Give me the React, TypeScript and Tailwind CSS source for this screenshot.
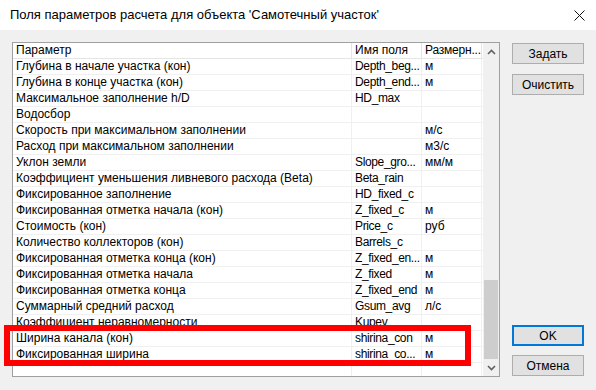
import React from 'react'

type Row = { name: string; field: string; unit: string }

const rows: Row[] = [
  { name: 'Глубина в начале участка (кон)', field: 'Depth_beg...', unit: 'м' },
  { name: 'Глубина в конце участка (кон)', field: 'Depth_end...', unit: 'м' },
  { name: 'Максимальное заполнение h/D', field: 'HD_max', unit: '' },
  { name: 'Водосбор', field: '', unit: '' },
  { name: 'Скорость при максимальном заполнении', field: '', unit: 'м/с' },
  { name: 'Расход при максимальном заполнении', field: '', unit: 'м3/с' },
  { name: 'Уклон земли', field: 'Slope_gro...', unit: 'мм/м' },
  { name: 'Коэффициент уменьшения ливневого расхода (Beta)', field: 'Beta_rain', unit: '' },
  { name: 'Фиксированное заполнение', field: 'HD_fixed_c', unit: '' },
  { name: 'Фиксированная отметка начала (кон)', field: 'Z_fixed_c', unit: 'м' },
  { name: 'Стоимость (кон)', field: 'Price_c', unit: 'руб' },
  { name: 'Количество коллекторов (кон)', field: 'Barrels_c', unit: '' },
  { name: 'Фиксированная отметка конца (кон)', field: 'Z_fixed_en...', unit: 'м' },
  { name: 'Фиксированная отметка начала', field: 'Z_fixed', unit: 'м' },
  { name: 'Фиксированная отметка конца', field: 'Z_fixed_end', unit: 'м' },
  { name: 'Суммарный средний расход', field: 'Gsum_avg', unit: 'л/с' },
  { name: 'Коэффициент неравномерности', field: 'Kupev', unit: '' },
  { name: 'Ширина канала (кон)', field: 'shirina_con', unit: 'м' },
  { name: 'Фиксированная ширина', field: 'shirina_co...', unit: 'м' },
]

function Chevron({ up }: { up?: boolean }) {
  return (
    <svg width="9" height="6" viewBox="0 0 9 6" className={up ? '' : 'rotate-180'}>
      <path d="M1 5 L4.5 1.5 L8 5" fill="none" stroke="#606060" strokeWidth="1.6" />
    </svg>
  )
}

function WinButton({ label, primary }: { label: string; primary?: boolean }) {
  return (
    <button
      className={`flex h-[21px] w-[72px] items-center justify-center bg-[#e1e1e1] text-[12px] text-black ${
        primary ? 'border-2 border-[#0078d7]' : 'border border-[#adadad]'
      }`}
    >
      {label}
    </button>
  )
}

export default function App() {
  return (
    <div className="relative flex h-[390px] w-[596px] flex-col overflow-hidden bg-[#f0f0f0] font-['Liberation_Sans',sans-serif] text-black">
      <div className="flex h-[30px] shrink-0 items-center justify-between bg-white pl-[10px] pr-[11px]">
        <span className="text-[13px]">Поля параметров расчета для объекта 'Самотечный участок'</span>
        <svg width="11" height="11" viewBox="0 0 11 11">
          <path d="M0.5 0.5 L10.5 10.5 M10.5 0.5 L0.5 10.5" stroke="#111" strokeWidth="1" />
        </svg>
      </div>

      <div className="flex flex-1 gap-[12px] pl-[12px] pt-[12px]">
        <div className="flex h-[335px] w-[488px] border border-[#a0a0a0] bg-white text-[12px]">
          <div className="flex flex-1 flex-col">
            <div className="flex h-[16px] shrink-0 border-b border-[#e5e5e5] leading-[15px]">
              <div className="w-[339px] border-r border-[#e5e5e5] pl-[3px]">Параметр</div>
              <div className="w-[70px] border-r border-[#e5e5e5] pl-[3px]">Имя поля</div>
              <div className="w-[60px] whitespace-nowrap border-r border-[#e5e5e5] pl-[3px] tracking-[-0.2px]">Размерн...</div>
            </div>
            {rows.map((r) => (
              <div key={r.name} className="flex h-[16px] shrink-0 border-b border-[#f0f0f0] leading-[14px]">
                <div className="w-[339px] whitespace-nowrap border-r border-[#f0f0f0] pl-[3px]">{r.name}</div>
                <div className="w-[70px] whitespace-nowrap border-r border-[#f0f0f0] pl-[3px] tracking-[-0.35px]">{r.field}</div>
                <div className="w-[60px] whitespace-nowrap border-r border-[#f0f0f0] pl-[3px]">{r.unit}</div>
              </div>
            ))}
            <div className="flex flex-1">
              <div className="w-[339px] border-r border-[#f0f0f0]" />
              <div className="w-[70px] border-r border-[#f0f0f0]" />
              <div className="w-[60px] border-r border-[#f0f0f0]" />
            </div>
          </div>
          <div className="flex w-[16px] flex-col bg-[#f0f0f0]">
            <div className="flex h-[17px] items-center justify-center">
              <Chevron up />
            </div>
            <div className="flex flex-1 flex-col justify-end px-[1px]">
              <div className="h-[79px] bg-[#cdcdcd]" />
            </div>
            <div className="flex h-[17px] items-center justify-center">
              <Chevron />
            </div>
          </div>
        </div>

        <div className="flex h-[335px] flex-col">
          <div className="mt-[1px] flex flex-col gap-[10px]">
            <WinButton label="Задать" />
            <WinButton label="Очистить" />
          </div>
          <div className="flex-1" />
          <div className="mb-[1px] flex flex-col gap-[9px]">
            <WinButton label="OK" primary />
            <WinButton label="Отмена" />
          </div>
        </div>
      </div>

      <div className="pointer-events-none absolute left-[4px] top-[325px] h-[41px] w-[467px] border-[6px] border-[#ff0000]" />
    </div>
  )
}
